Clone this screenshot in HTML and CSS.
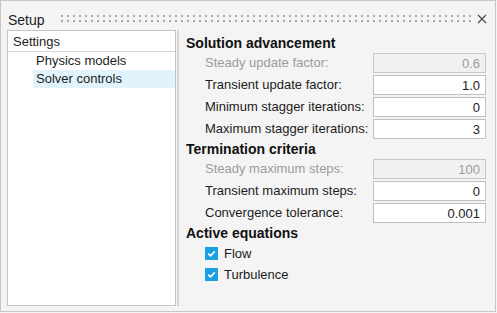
FILE: index.html
```html
<!DOCTYPE html>
<html lang="en">
<head>
    <meta charset="UTF-8">
    <title>Setup</title>
    <link rel="stylesheet" href="styles.css">
</head>
<body>
    <div class="window">
        <div class="titlebar">
            <span class="title">Setup</span>
            <svg class="grip" height="8">
                <defs>
                    <pattern id="dots" width="6" height="5" patternUnits="userSpaceOnUse">
                        <rect width="2" height="2" fill="#a8a8a8"/>
                    </pattern>
                </defs>
                <rect width="100%" height="7" fill="url(#dots)"/>
            </svg>
            <svg class="close" width="10" height="10" viewBox="0 0 10 10">
                <path d="M1 1 L9 9 M9 1 L1 9" stroke="#4a4a4a" stroke-width="1.2" fill="none"/>
            </svg>
        </div>
        <div class="content">
            <div class="tree">
                <div class="tree-header">Settings</div>
                <div class="tree-item">Physics models</div>
                <div class="tree-item selected">Solver controls</div>
            </div>
            <div class="splitter"></div>
            <form class="form">
                <h2>Solution advancement</h2>
                <div class="row disabled">
                    <label for="steadyFactor">Steady update factor:</label>
                    <input type="text" id="steadyFactor" value="0.6" disabled>
                </div>
                <div class="row">
                    <label for="transientFactor">Transient update factor:</label>
                    <input type="text" id="transientFactor" value="1.0">
                </div>
                <div class="row">
                    <label for="minStagger">Minimum stagger iterations:</label>
                    <input type="text" id="minStagger" value="0">
                </div>
                <div class="row">
                    <label for="maxStagger">Maximum stagger iterations:</label>
                    <input type="text" id="maxStagger" value="3">
                </div>

                <h2>Termination criteria</h2>
                <div class="row disabled">
                    <label for="steadySteps">Steady maximum steps:</label>
                    <input type="text" id="steadySteps" value="100" disabled>
                </div>
                <div class="row">
                    <label for="transientSteps">Transient maximum steps:</label>
                    <input type="text" id="transientSteps" value="0">
                </div>
                <div class="row">
                    <label for="tolerance">Convergence tolerance:</label>
                    <input type="text" id="tolerance" value="0.001">
                </div>

                <h2>Active equations</h2>
                <div class="checks">
                    <div class="check">
                        <span class="box"><svg width="13" height="13" viewBox="0 0 13 13"><path d="M3.2 6.6 L5.5 8.8 L9.8 4.4" stroke="#fff" stroke-width="1.6" fill="none"/></svg></span>
                        Flow
                    </div>
                    <div class="check">
                        <span class="box"><svg width="13" height="13" viewBox="0 0 13 13"><path d="M3.2 6.6 L5.5 8.8 L9.8 4.4" stroke="#fff" stroke-width="1.6" fill="none"/></svg></span>
                        Turbulence
                    </div>
                </div>
            </form>
        </div>
    </div>
</body>
</html>
```

FILE: styles.css
```css
body {
    margin: 0;
    padding: 0;
    background-color: #f4f4f4;
    font-family: "Liberation Sans", Arial, sans-serif;
    font-size: 13px;
    color: #1c1c1c;
}
.window {
    width: 496px;
    height: 312px;
    box-sizing: border-box;
    border: 1px solid #c6c6c6;
    background: #f4f4f4;
    display: flex;
    flex-direction: column;
}
.titlebar {
    height: 29px;
    box-sizing: border-box;
    padding: 11px 8px 0 7px;
    display: flex;
    align-items: flex-start;
}
.title {
    font-size: 14px;
    line-height: 16px;
}
.grip {
    flex: 1;
    margin: 3px 6px 0 16px;
}
.close {
    margin-top: 2px;
}
.content {
    flex: 1;
    display: flex;
    margin: 0 0 5px 6px;
}
.tree {
    width: 169px;
    box-sizing: border-box;
    border: 1px solid #c4c4c4;
    background: #fff;
}
.tree-header {
    height: 21px;
    box-sizing: border-box;
    padding: 2px 0 0 5px;
    line-height: 18px;
    border-bottom: 1px solid #d6d6d6;
}
.tree-item {
    height: 18px;
    line-height: 18px;
    margin-left: 25px;
    padding-left: 3px;
}
.tree-item.selected {
    background-color: #e1f4fb;
}
.splitter {
    width: 2px;
    margin-left: 1px;
    background: #d6d6d6;
}
.form {
    flex: 1;
    margin: 0;
    padding: 5px 9px 0 7px;
    display: flex;
    flex-direction: column;
    gap: 2px;
}
.form h2 {
    margin: 0;
    font-size: 14px;
    line-height: 16px;
    font-weight: bold;
    color: #111;
}
.row {
    display: flex;
    align-items: center;
    height: 20px;
    padding-left: 19px;
}
.row label {
    flex: 1;
    line-height: 20px;
}
.row input {
    width: 113px;
    height: 20px;
    box-sizing: border-box;
    margin: 0;
    padding: 0 5px 0 0;
    border: 1px solid #c0c0c0;
    border-radius: 0;
    background: #fff;
    font-family: inherit;
    font-size: 13px;
    color: #1c1c1c;
    text-align: right;
    outline: none;
}
.row.disabled label {
    color: #9b9b9b;
}
.row.disabled input {
    background: #f1f1f1;
    border-color: #c8c8c8;
    color: #9b9b9b;
}
.check {
    display: flex;
    align-items: center;
    height: 21px;
    padding-left: 19px;
}
.box {
    width: 13px;
    height: 13px;
    background-color: #1a9fe2;
    margin-right: 6px;
    display: flex;
}
```
